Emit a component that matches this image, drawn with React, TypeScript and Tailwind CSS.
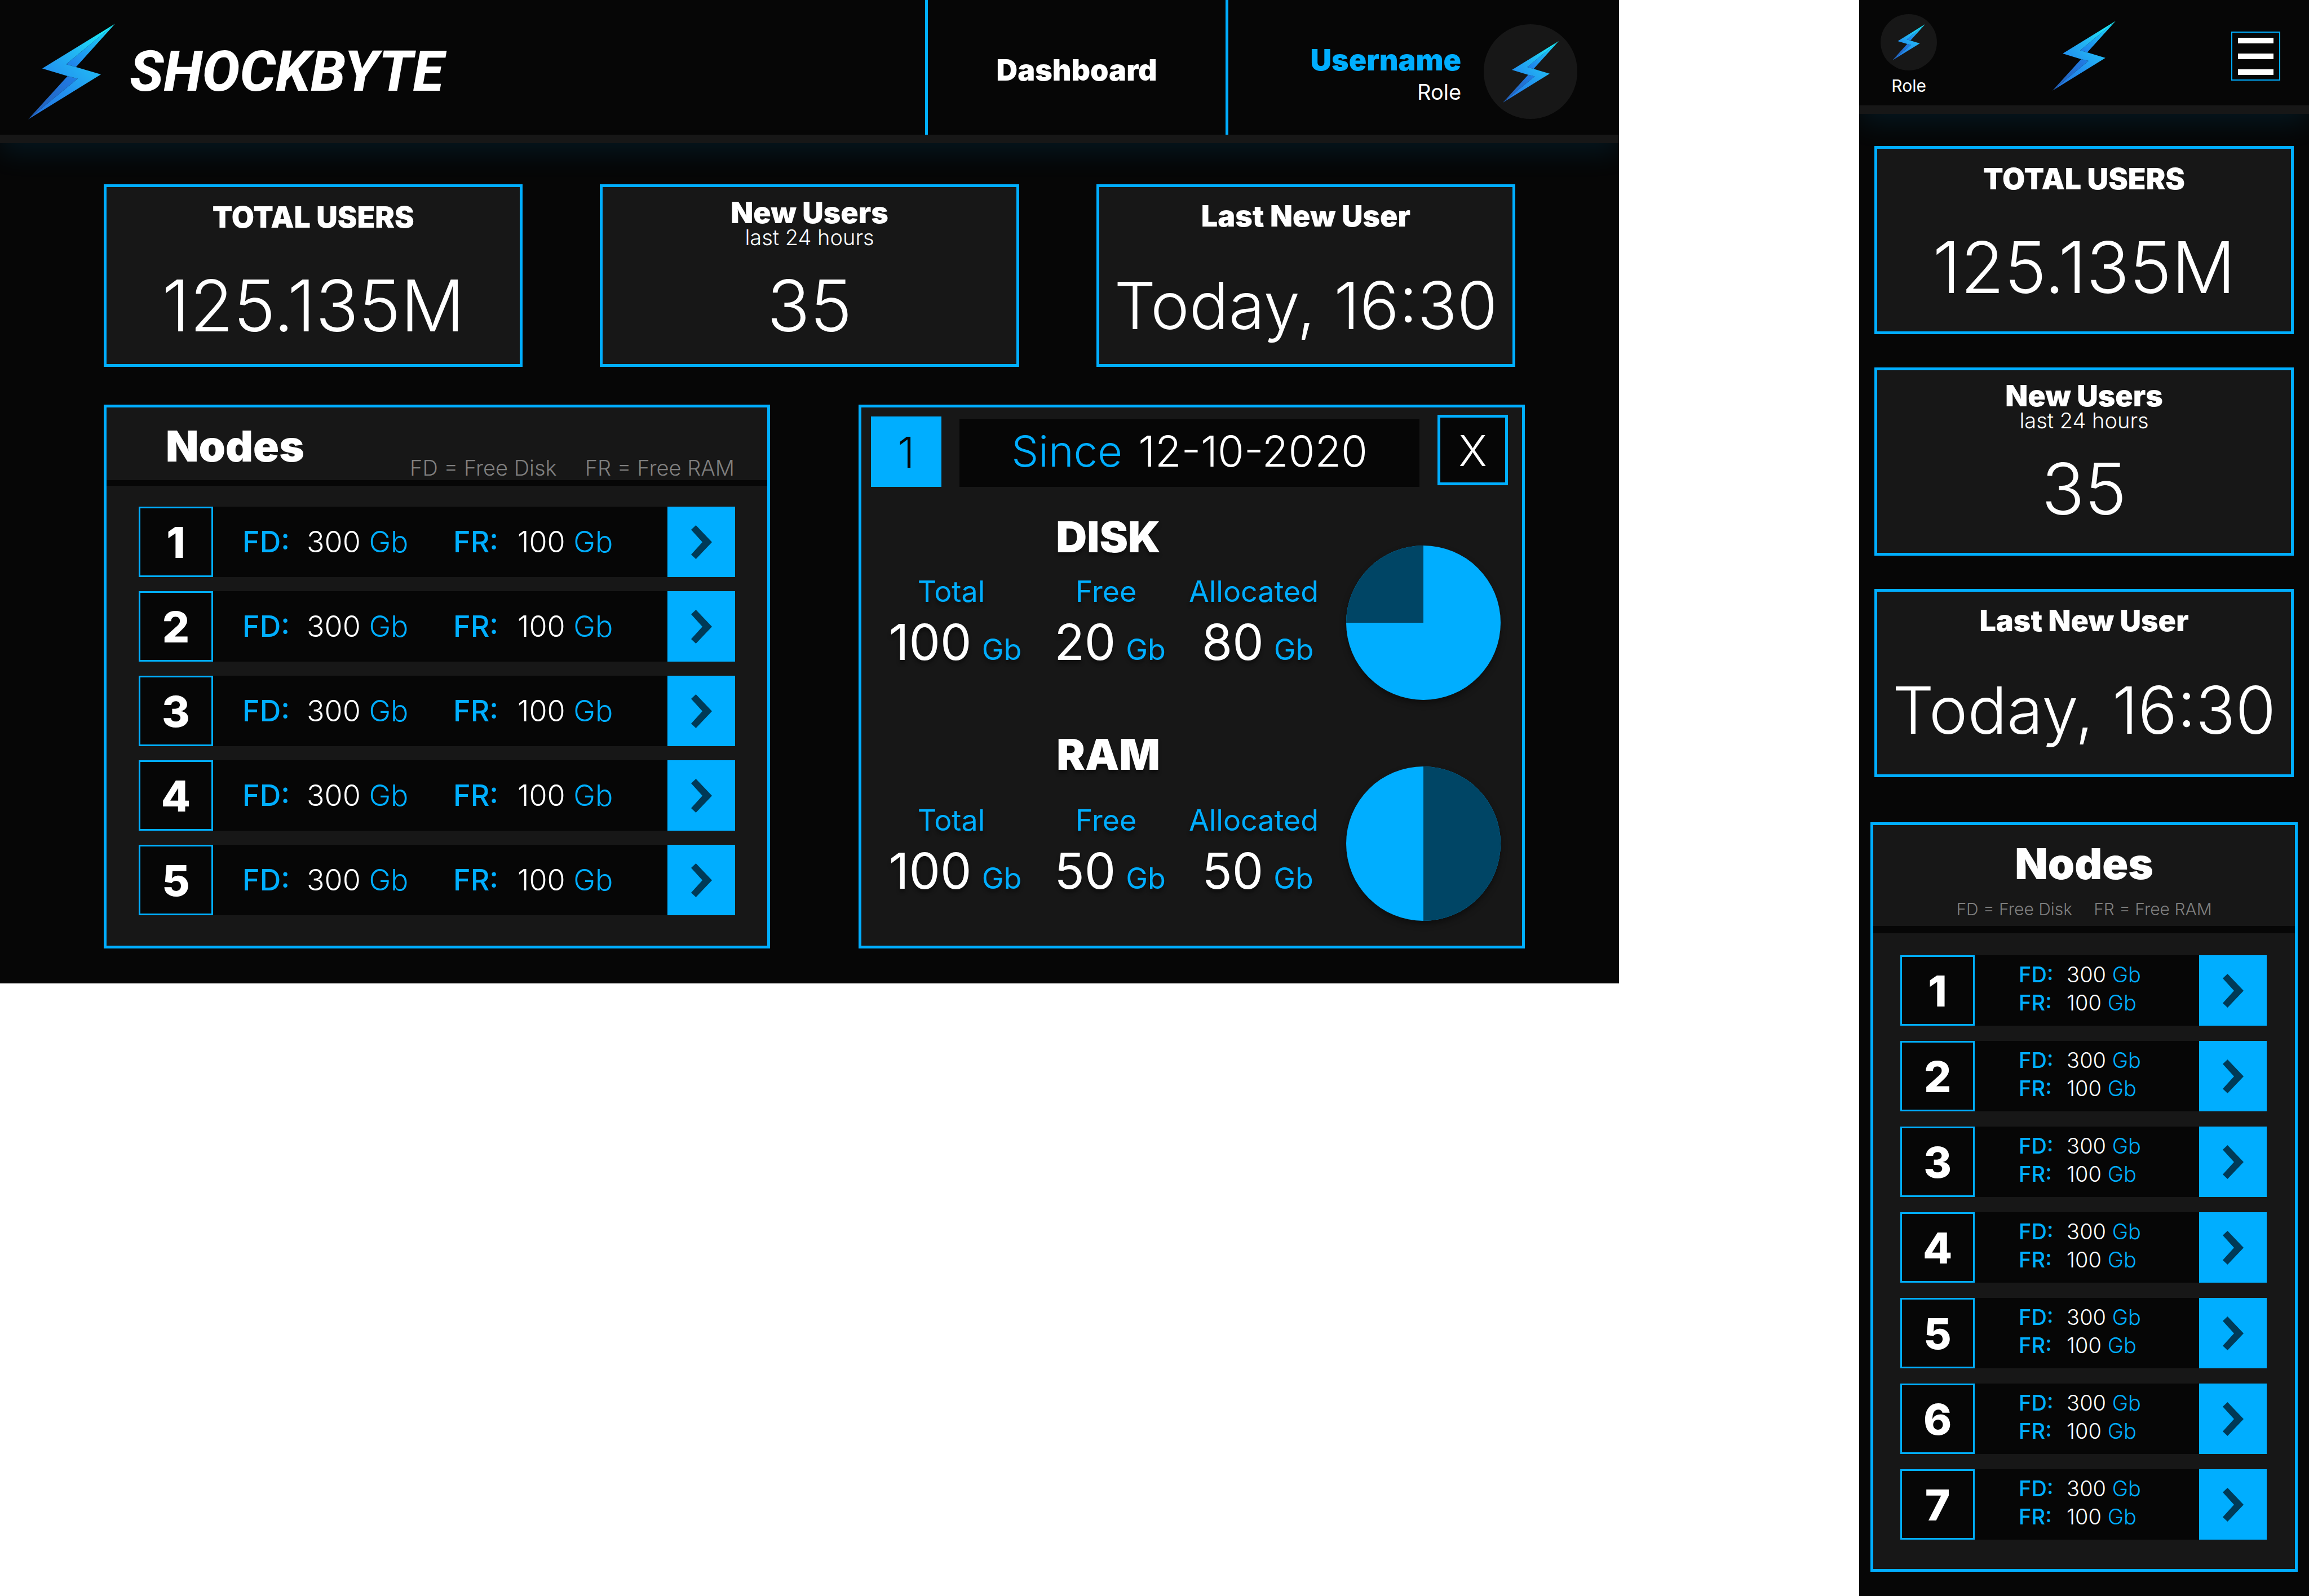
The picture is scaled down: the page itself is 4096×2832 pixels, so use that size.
import { useId } from "react";

type Node = { id: number; disk: number; ram: number };

const nodes: Node[] = [1, 2, 3, 4, 5, 6, 7].map((id) => ({ id, disk: 300, ram: 100 }));

function Bolt({ className }: { className: string }) {
  const id = useId();
  const light = `${id}-light`;
  const dark = `${id}-dark`;
  return (
    <svg viewBox="0 0 247 272" className={className} aria-hidden="true">
      <defs>
        <linearGradient id={light} gradientUnits="userSpaceOnUse" x1="247" y1="0" x2="0" y2="272">
          <stop offset="0" stopColor="#1bfcfc" />
          <stop offset="0.36" stopColor="#22b8f3" />
          <stop offset="0.635" stopColor="#2292f0" />
          <stop offset="1" stopColor="#236fdc" />
        </linearGradient>
        <linearGradient id={dark} gradientUnits="userSpaceOnUse" x1="247" y1="0" x2="0" y2="272">
          <stop offset="0" stopColor="#1ce0fa" />
          <stop offset="0.45" stopColor="#1f86ec" />
          <stop offset="0.56" stopColor="#2179e0" />
          <stop offset="1" stopColor="#2559ad" />
        </linearGradient>
      </defs>
      <path d="M247 0 L108 115 L136 123 Z M112 149 L0 272 L141 156 Z" fill={`url(#${dark})`} />
      <path d="M247 0 L40 127 L112 149 L141 156 L0 272 L207 144 L136 123 L108 115 Z" fill={`url(#${light})`} />
    </svg>
  );
}

function Chevron() {
  return (
    <svg viewBox="0 0 37 60" className="h-[60px] w-[37px]" aria-hidden="true">
      <path d="M8.5 0 L37 30 L8.5 60 L0 52 L20 30 L0 8 Z" fill="#003a57" />
    </svg>
  );
}

function StatCard({
  title,
  note,
  value,
  className,
  titleClass,
  valueClass,
}: {
  title: string;
  note?: string;
  value: string;
  className: string;
  titleClass: string;
  valueClass: string;
}) {
  return (
    <section className={`border-[5px] border-[#00aeff] bg-[#171717] text-center ${className}`}>
      <div className={`h-[150px] ${titleClass}`}>
        <h2 className="text-[52px] leading-[52px] font-black">{title}</h2>
        {note && <p className="text-[38px] leading-[34px] font-light">{note}</p>}
      </div>
      <p className={`leading-[120px] font-light whitespace-nowrap ${valueClass}`}>{value}</p>
    </section>
  );
}

function StatCards({ className }: { className: string }) {
  return (
    <>
      <StatCard title="TOTAL USERS" value="125.135M" className={className} titleClass="pt-[28px]" valueClass="text-[126px]" />
      <StatCard title="New Users" note="last 24 hours" value="35" className={className} titleClass="pt-[20px]" valueClass="text-[126px]" />
      <StatCard title="Last New User" value="Today, 16:30" className={className} titleClass="pt-[26px]" valueClass="text-[116px]" />
    </>
  );
}

function Amount({ label, value, className, labelClass }: { label: string; value: number; className: string; labelClass: string }) {
  return (
    <span className={`flex font-light text-[#00aeff] ${className}`}>
      <span className={`font-medium ${labelClass}`}>{label}</span>
      <span>
        <span className="text-white">{value}</span> Gb
      </span>
    </span>
  );
}

function NodeRow({ node, compact }: { node: Node; compact?: boolean }) {
  return (
    <li className="flex h-[125px] bg-[#060606]">
      <span className="flex w-[132px] items-center justify-center border-[3px] border-[#00aeff] text-[76px] leading-[76px] font-extrabold">
        {node.id}
      </span>
      {compact ? (
        <span className="flex flex-1 flex-col pt-[9px] pl-[78px]">
          <Amount label="FD:" value={node.disk} className="text-[38px] leading-[50px]" labelClass="w-[85px]" />
          <Amount label="FR:" value={node.ram} className="text-[38px] leading-[50px]" labelClass="w-[85px]" />
        </span>
      ) : (
        <span className="flex flex-1 items-center pl-[52px]">
          <Amount label="FD:" value={node.disk} className="w-[374px] text-[52px]" labelClass="w-[114px]" />
          <Amount label="FR:" value={node.ram} className="text-[52px]" labelClass="w-[114px]" />
        </span>
      )}
      <button type="button" aria-label={`Open node ${node.id}`} className="flex w-[120px] items-center justify-center bg-[#00aeff]">
        <Chevron />
      </button>
    </li>
  );
}

function Pie({ slice }: { slice: string }) {
  return (
    <svg viewBox="0 0 274 274" className="h-[274px] w-[274px] drop-shadow-[0_6px_6px_rgba(0,0,0,0.4)]" aria-hidden="true">
      <circle cx="137" cy="137" r="137" fill="#00aeff" />
      <path d={slice} fill="#004565" />
    </svg>
  );
}

function Usage({
  title,
  stats,
  slice,
  className,
  titleClass,
  pieClass,
}: {
  title: string;
  stats: [string, number][];
  slice: string;
  className: string;
  titleClass: string;
  pieClass: string;
}) {
  return (
    <section className={`flex items-start justify-between pr-[38px] pl-[22px] ${className}`}>
      <div className="grid grid-cols-[275px_274px_250px] text-center [text-shadow:0_6px_6px_rgba(0,0,0,0.4)]">
        <h3 className={`col-span-3 pl-[33px] text-[76px] leading-[72px] font-black ${titleClass}`}>{title}</h3>
        {stats.map(([label, value]) => (
          <div key={label}>
            <div className="text-[52px] leading-[48px] text-[#00aeff]">{label}</div>
            <div className="mt-[23px] flex items-baseline justify-center gap-[18px] pl-[14px] text-[88px] leading-[84px]">
              {value}
              <span className="text-[52px] leading-[48px] text-[#00aeff]">Gb</span>
            </div>
          </div>
        ))}
      </div>
      <div className={pieClass}>
        <Pie slice={slice} />
      </div>
    </section>
  );
}

function Desktop() {
  return (
    <div className="w-[70.12%] overflow-hidden bg-[#060606] pb-[62px]">
      <header className="flex h-[254px] border-b-[15px] border-[#171717] shadow-[0_16px_48px_rgba(0,174,255,0.11)]">
        <a href="#" className="flex flex-1 items-center gap-[26px] pt-[15px] pl-[50px]">
          <Bolt className="h-[170px] w-[154px]" />
          <span className="font-[Roboto] text-[100px] leading-[100px] font-extrabold italic">SHOCKBYTE</span>
        </a>
        <nav className="flex w-[538px] border-x-[5px] border-[#00aeff]">
          <a href="#" className="flex flex-1 items-center justify-center pt-[10px] text-[52px] font-black">
            Dashboard
          </a>
        </nav>
        <div className="flex w-[693px] items-center justify-end gap-[40px] pt-[15px] pr-[74px]">
          <div className="pt-[12px] text-right">
            <div className="text-[52px] leading-[60px] font-black text-[#00aeff]">Username</div>
            <div className="text-[38px] leading-[52px]">Role</div>
          </div>
          <div className="flex h-[168px] w-[166px] items-center justify-center rounded-full bg-[#171717]">
            <Bolt className="h-[109px] w-[99px]" />
          </div>
        </div>
      </header>

      <main>
        <div className="grid grid-cols-3 gap-[137px] px-[184px] pt-[73px]">
          <StatCards className="h-[324px]" />
        </div>

        <div className="grid grid-cols-2 gap-[157px] pt-[67px] pr-[167px] pl-[184px]">
          <section className="border-[5px] border-[#00aeff] bg-[#171717] pb-[54px]">
            <div className="flex h-[139px] items-end justify-between border-b-[10px] border-[#060606] pr-[58px] pl-[105px]">
              <h2 className="mb-[25px] text-[76px] leading-[72px] font-black">Nodes</h2>
              <p className="mb-[5px] flex gap-[50px] text-[38px] leading-[34px] font-light text-[#7f7f7f]">
                <span>FD = Free Disk</span>
                <span>FR = Free RAM</span>
              </p>
            </div>
            <ul className="flex flex-col gap-[25px] px-[57px] pt-[37px]">
              {nodes.slice(0, 5).map((node) => (
                <NodeRow key={node.id} node={node} />
              ))}
            </ul>
          </section>

          <section className="border-[5px] border-[#00aeff] bg-[#171717]">
            <div className="flex items-end gap-[32px] pt-[13px] pr-[25px] pl-[17px] text-[76px] leading-[76px] font-light">
              <span className="flex h-[125px] w-[125px] items-center justify-center bg-[#00aeff] text-[#060606]">1</span>
              <p className="flex h-[120px] flex-1 items-center justify-center gap-[28px] bg-[#060606] pb-[8px]">
                <span className="text-[#00aeff]">Since</span>
                <span>12-10-2020</span>
              </p>
              <button
                type="button"
                aria-label="Close"
                className="mb-[3px] flex h-[125px] w-[125px] items-center justify-center border-[5px] border-[#00aeff] bg-[#060606]"
              >
                X
              </button>
            </div>
            <Usage
              title="DISK"
              stats={[["Total", 100], ["Free", 20], ["Allocated", 80]]}
              slice="M137 137 V0 A137 137 0 0 0 0 137 Z"
              className="mt-[52px]"
              titleClass="pb-[38px]"
              pieClass="pt-[52px]"
            />
            <Usage
              title="RAM"
              stats={[["Total", 100], ["Free", 50], ["Allocated", 50]]}
              slice="M137 0 A137 137 0 0 1 137 274 Z"
              className="mt-[60px]"
              titleClass="pb-[58px]"
              pieClass="pt-[58px]"
            />
          </section>
        </div>
      </main>
    </div>
  );
}

function Mobile() {
  return (
    <div className="min-h-screen w-[19.48%] overflow-hidden bg-[#060606]">
      <header className="grid h-[202px] grid-cols-[1fr_auto_1fr] items-start border-b-[15px] border-[#171717] shadow-[0_16px_48px_rgba(0,174,255,0.11)]">
        <div className="flex flex-col items-start pt-[25px] pl-[38px]">
          <div className="flex h-[100px] w-[100px] items-center justify-center rounded-full bg-[#171717]">
            <Bolt className="h-[64px] w-[58px]" />
          </div>
          <div className="mt-[9px] w-[100px] text-center text-[30px] leading-[36px]">Role</div>
        </div>
        <a href="#" aria-label="Shockbyte" className="pt-[37px]">
          <Bolt className="h-[124px] w-[112px]" />
        </a>
        <div className="flex justify-end pt-[56px] pr-[51px]">
          <button
            type="button"
            aria-label="Menu"
            className="flex h-[87px] w-[87px] flex-col items-center justify-center gap-[18px] border-2 border-[#00aeff]"
          >
            <span className="h-[10px] w-[63px] bg-white" />
            <span className="h-[10px] w-[63px] bg-white" />
            <span className="h-[10px] w-[63px] bg-white" />
          </button>
        </div>
      </header>

      <main>
        <div className="flex flex-col gap-[59px] px-[27px] pt-[57px]">
          <StatCards className="h-[334px]" />
        </div>

        <section className="mx-[20px] mt-[80px] mb-[43px] border-[5px] border-[#00aeff] bg-[#171717] pb-[52px]">
          <div className="h-[192px] border-b-[13px] border-[#060606] pt-[32px] text-center">
            <h2 className="text-[76px] leading-[72px] font-black">Nodes</h2>
            <p className="mt-[27px] flex justify-center gap-[38px] text-[30px] leading-[36px] font-light text-[#7f7f7f]">
              <span>FD = Free Disk</span>
              <span>FR = Free RAM</span>
            </p>
          </div>
          <ul className="flex flex-col gap-[27px] pt-[39px] pr-[50px] pl-[48px]">
            {nodes.map((node) => (
              <NodeRow key={node.id} node={node} compact />
            ))}
          </ul>
        </section>
      </main>
    </div>
  );
}

export default function App() {
  return (
    <div className="flex min-h-screen items-start justify-between bg-white font-[Inter,sans-serif] text-white">
      <Desktop />
      <Mobile />
    </div>
  );
}
